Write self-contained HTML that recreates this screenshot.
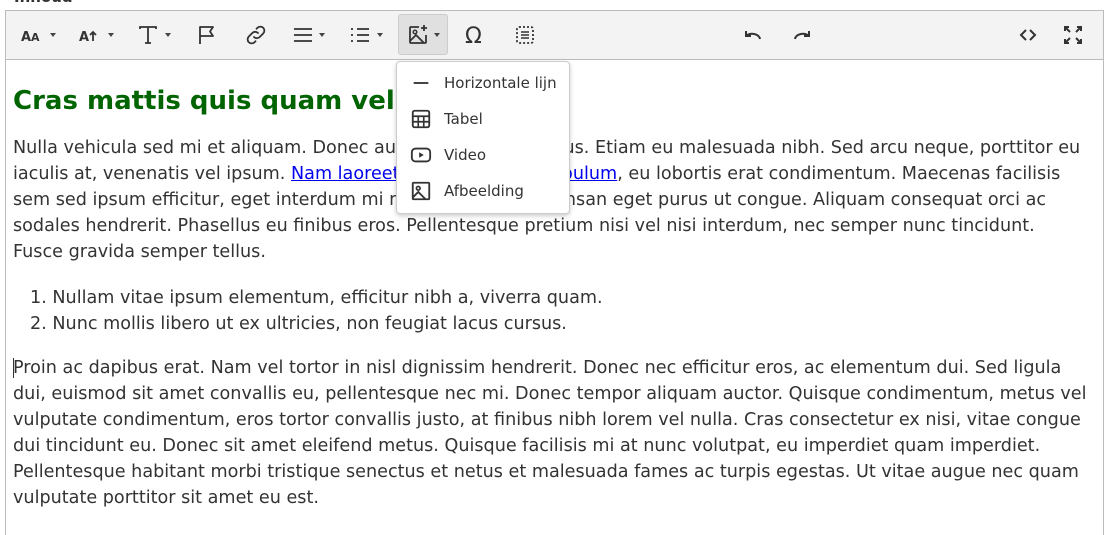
<!DOCTYPE html>
<html><head><meta charset="utf-8"><style>
*{margin:0;padding:0;box-sizing:border-box}
html,body{width:1110px;height:535px;overflow:hidden}
body{background:#fff;font-family:"DejaVu Sans","Liberation Sans",sans-serif;color:#333;position:relative}
.lbl{position:absolute;left:14px;top:-12px;font-weight:bold;font-size:15px;color:#333}
.ed{position:absolute;left:5px;top:10px;width:1099px;height:526px;border:1px solid #bbb;border-bottom:none}
.tb{position:absolute;left:0;top:0;width:100%;height:49px;background:#f3f3f3;border-bottom:1px solid #bbb}
.ic{position:absolute;top:12px;width:24px;height:24px}
.act{position:absolute;left:392px;top:3px;width:50px;height:41px;background:#e0e0e0;border:1px solid #ccc;border-radius:3px}
.car{position:absolute;top:22px;width:0;height:0;border-left:3.5px solid transparent;border-right:3.5px solid transparent;border-top:4px solid #444}
.txt{position:absolute;left:13px;font-size:17.6px;line-height:26px;white-space:nowrap;color:#333}
h1{position:absolute;left:13px;top:86px;font-size:26px;color:#006400;font-weight:bold;white-space:nowrap}
a{color:#00e;text-decoration:underline}
.dd{position:absolute;left:396px;top:61px;width:174px;height:153px;background:#fff;border:1px solid #ccc;border-radius:4px;box-shadow:0 2px 5px rgba(0,0,0,.2)}
.it{position:absolute;left:47px;font-size:15px;color:#333;white-space:nowrap}
.dd svg{position:absolute;left:13px}
</style></head><body>
<div class="lbl">Inhoud</div>
<div class="ed">
<div class="tb">
<div class="act"></div>
<svg class="ic" style="left:14px" viewBox="0 0 24 24"><text x="1" y="18" font-family="DejaVu Sans" font-weight="bold" font-size="13" fill="#333">A</text><text x="11" y="18" font-family="DejaVu Sans" font-weight="bold" font-size="11" fill="#333">A</text></svg>
<div class="car" style="left:44px"></div>
<svg class="ic" style="left:72px" viewBox="0 0 24 24"><text x="1" y="18" font-family="DejaVu Sans" font-weight="bold" font-size="13" fill="#333">A</text><path d="M15 18V9M12 12l3-3 3 3" stroke="#333" stroke-width="1.8" fill="none"/></svg>
<div class="car" style="left:102px"></div>
<svg class="ic" style="left:130px" viewBox="0 0 24 24"><path d="M4 6V4h16v2M12 4v16M9 20h6" stroke="#333" stroke-width="1.8" fill="none"/></svg>
<div class="car" style="left:159px"></div>
<svg class="ic" style="left:189px" viewBox="0 0 24 24"><path d="M5 21V4h13l-3 4.5 3 4.5H5" stroke="#333" stroke-width="1.8" fill="none" stroke-linejoin="round"/></svg>
<svg class="ic" style="left:238px" viewBox="0 0 24 24"><path d="M10 14a4 4 0 0 0 5.7 0l3.5-3.5a4 4 0 0 0-5.7-5.7l-1 1M14 10a4 4 0 0 0-5.7 0l-3.5 3.5a4 4 0 0 0 5.7 5.7l1-1" stroke="#333" stroke-width="1.8" fill="none" stroke-linecap="round"/></svg>
<svg class="ic" style="left:285px" viewBox="0 0 24 24"><path d="M3 6h18M3 12h18M3 18h18" stroke="#333" stroke-width="1.8"/></svg>
<div class="car" style="left:313px"></div>
<svg class="ic" style="left:342px" viewBox="0 0 24 24"><path d="M9 6h12M9 12h12M9 18h12" stroke="#333" stroke-width="1.8"/><path d="M3 6h2M3 12h2M3 18h2" stroke="#333" stroke-width="1.8"/></svg>
<div class="car" style="left:371px"></div>
<svg class="ic" style="left:400px" viewBox="0 0 24 24"><path d="M13 4H5a1 1 0 0 0-1 1v14a1 1 0 0 0 1 1h14a1 1 0 0 0 1-1v-7" stroke="#333" stroke-width="1.8" fill="none"/><path d="M4 18l6-6 8 8" stroke="#333" stroke-width="1.8" fill="none"/><circle cx="9" cy="9" r="1.8" stroke="#333" stroke-width="1.5" fill="none"/><path d="M18 2v6M15 5h6" stroke="#333" stroke-width="1.8"/></svg>
<div class="car" style="left:428px"></div>
<svg class="ic" style="left:458px" viewBox="0 0 24 24"><text x="1" y="20" font-family="DejaVu Sans" font-size="22" fill="#333">Ω</text></svg>
<svg class="ic" style="left:507px" viewBox="0 0 24 24"><rect x="4" y="4" width="16" height="16" rx="2" stroke="#333" stroke-width="1.8" fill="none" stroke-dasharray="2 2"/><path d="M8 9h8M8 12h8M8 15h8" stroke="#333" stroke-width="1.6"/></svg>
<svg class="ic" style="left:735px" viewBox="0 0 24 24"><path d="M5 8v5h5" stroke="#333" stroke-width="2" fill="none"/><path d="M5.5 12.5A8 6 0 0 1 19 16" stroke="#333" stroke-width="2" fill="none"/></svg>
<svg class="ic" style="left:784px" viewBox="0 0 24 24"><path d="M19 8v5h-5" stroke="#333" stroke-width="2" fill="none"/><path d="M18.5 12.5A8 6 0 0 0 5 16" stroke="#333" stroke-width="2" fill="none"/></svg>
<svg class="ic" style="left:1010px" viewBox="0 0 24 24"><path d="M10 7l-5 5 5 5M14 7l5 5-5 5" stroke="#333" stroke-width="2" fill="none"/></svg>
<svg class="ic" style="left:1055px" viewBox="0 0 24 24"><path d="M4 8V4h4M4 4l5 5M16 4h4v4M20 4l-5 5M4 16v4h4M4 20l5-5M20 16v4h-4M20 20l-5-5" stroke="#333" stroke-width="2" fill="none"/></svg>
</div>
</div>
<h1>Cras mattis quis quam vel</h1>
<div class="txt" style="top:135px">Nulla vehicula sed mi et aliquam. Donec auctor nisl in dui cursus. Etiam eu malesuada nibh. Sed arcu neque, porttitor eu<br>iaculis at, venenatis vel ipsum. <a>Nam laoreet quis nisl sed vestibulum</a>, eu lobortis erat condimentum. Maecenas facilisis<br>sem sed ipsum efficitur, eget interdum mi mattis. Donec accumsan eget purus ut congue. Aliquam consequat orci ac<br>sodales hendrerit. Phasellus eu finibus eros. Pellentesque pretium nisi vel nisi interdum, nec semper nunc tincidunt.<br>Fusce gravida semper tellus.</div>
<div class="txt" style="top:285px;left:30px">1. Nullam vitae ipsum elementum, efficitur nibh a, viverra quam.<br>2. Nunc mollis libero ut ex ultricies, non feugiat lacus cursus.</div>
<div style="position:absolute;left:13px;top:358px;width:1px;height:20px;background:#333"></div>
<div class="txt" style="top:355px">Proin ac dapibus erat. Nam vel tortor in nisl dignissim hendrerit. Donec nec efficitur eros, ac elementum dui. Sed ligula<br>dui, euismod sit amet convallis eu, pellentesque nec mi. Donec tempor aliquam auctor. Quisque condimentum, metus vel<br>vulputate condimentum, eros tortor convallis justo, at finibus nibh lorem vel nulla. Cras consectetur ex nisi, vitae congue<br>dui tincidunt eu. Donec sit amet eleifend metus. Quisque facilisis mi at nunc volutpat, eu imperdiet quam imperdiet.<br>Pellentesque habitant morbi tristique senectus et netus et malesuada fames ac turpis egestas. Ut vitae augue nec quam<br>vulputate porttitor sit amet eu est.</div>
<div class="dd">
<svg style="top:10px" width="22" height="22" viewBox="0 0 24 24"><path d="M4 12h16" stroke="#333" stroke-width="2"/></svg>
<div class="it" style="top:12px">Horizontale lijn</div>
<svg style="top:46px" width="22" height="22" viewBox="0 0 24 24"><rect x="3" y="3" width="18" height="18" rx="2" stroke="#333" stroke-width="2" fill="none"/><path d="M3 9h18M3 15h18M9 9v12M15 9v12" stroke="#333" stroke-width="1.8"/></svg>
<div class="it" style="top:48px">Tabel</div>
<svg style="top:82px" width="22" height="22" viewBox="0 0 24 24"><rect x="2" y="5" width="20" height="14" rx="4" stroke="#333" stroke-width="2" fill="none"/><path d="M10 9l5 3-5 3z" fill="#333"/></svg>
<div class="it" style="top:84px">Video</div>
<svg style="top:118px" width="22" height="22" viewBox="0 0 24 24"><rect x="3" y="3" width="18" height="18" rx="1" stroke="#333" stroke-width="2" fill="none"/><path d="M3 19l6-6 8 8" stroke="#333" stroke-width="2" fill="none"/><circle cx="9" cy="9" r="2" stroke="#333" stroke-width="1.8" fill="none"/></svg>
<div class="it" style="top:120px">Afbeelding</div>
</div>
</body></html>
